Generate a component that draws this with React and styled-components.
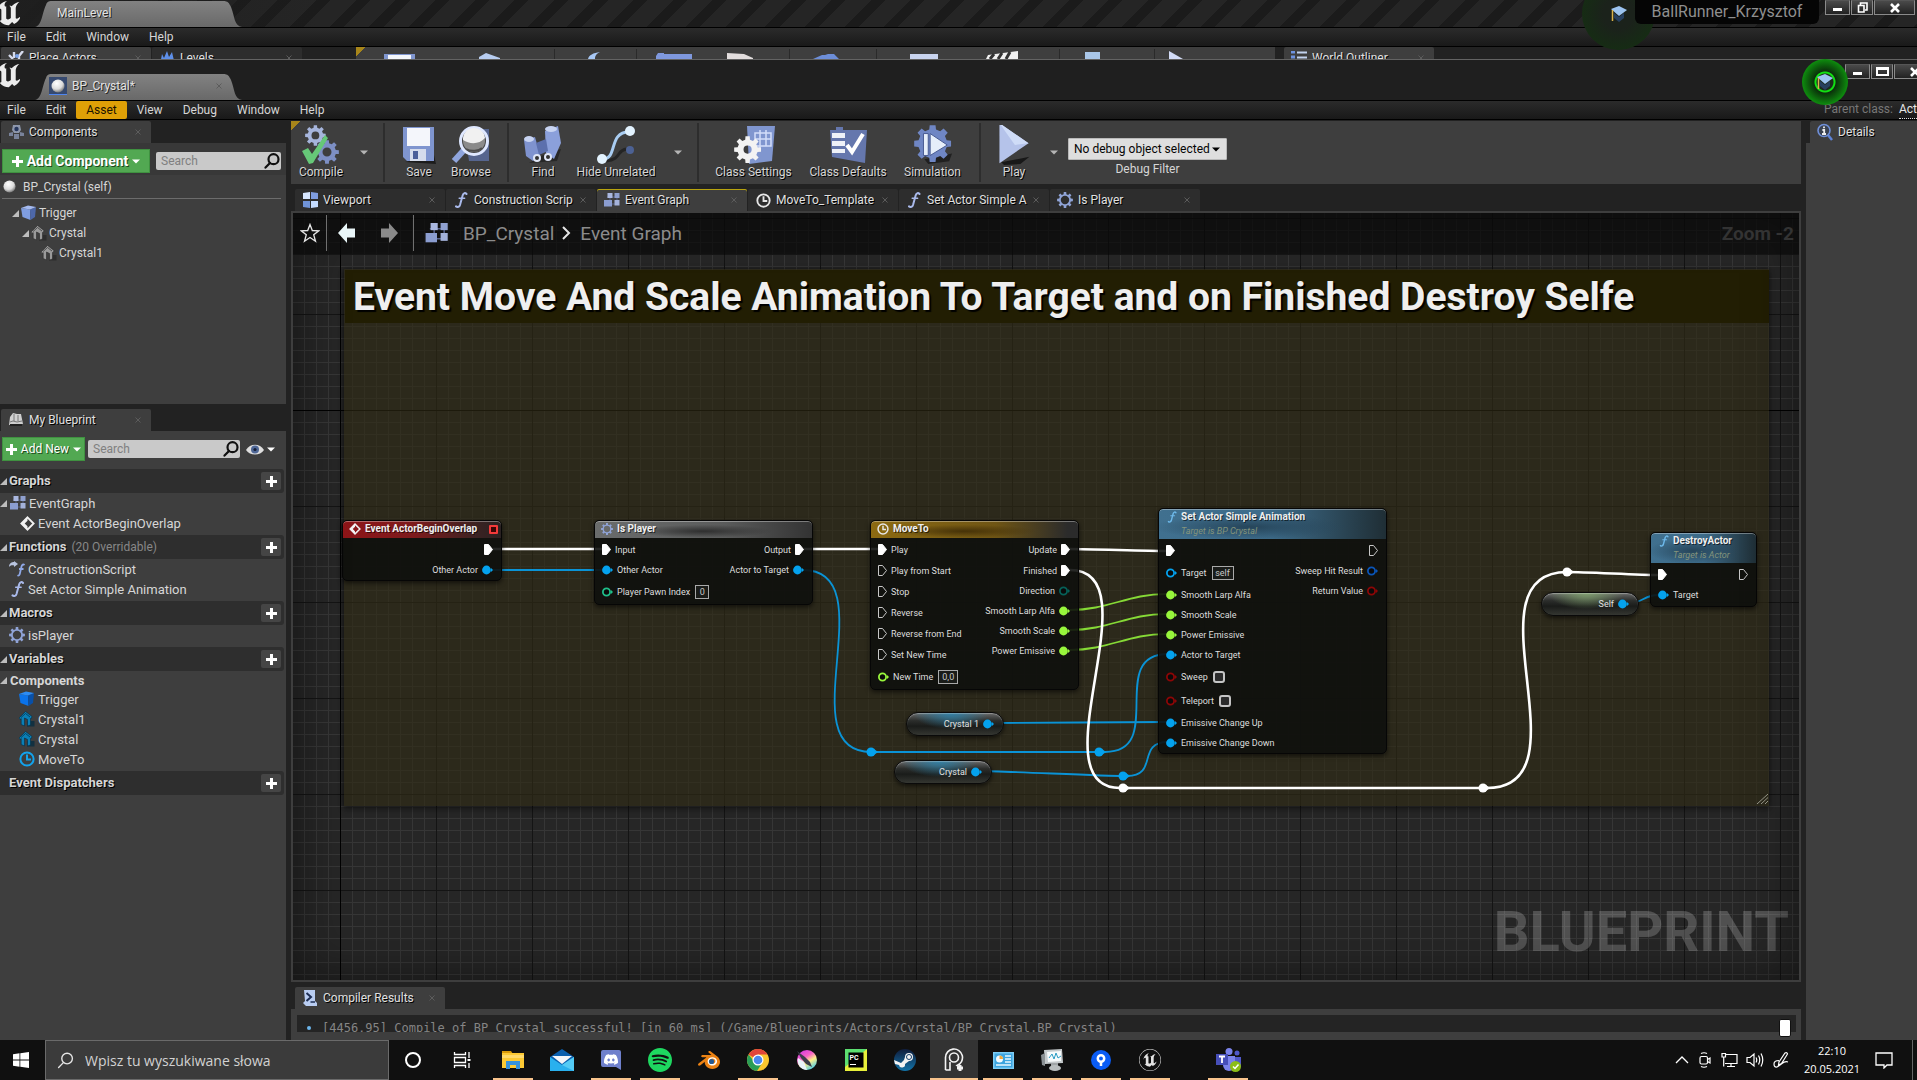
import React from "react";
import styled, { createGlobalStyle, css } from "styled-components";
import { SiUnrealengine, SiSpotify, SiBlender, SiSteam, SiDiscord } from "react-icons/si";

const GlobalStyle = createGlobalStyle`
  * { box-sizing: border-box; }
  body { margin: 0; background: #222; overflow: hidden; }
  body, button, input, select {
    font-family: Roboto, "Liberation Sans", sans-serif;
    font-size: 12px;
    color: #d6d6d6;
  }
  button { border: 0; padding: 0; background: none; cursor: default; }
  input:focus, select:focus { outline: none; }
  svg { display: block; flex: none; }
`;

/* ---------- icons ---------- */

const gearPath = (c, outer, inner, hole, teeth) => {
  const pts = [];
  const step = (Math.PI * 2) / teeth;
  for (let i = 0; i < teeth; i += 1) {
    const a = i * step - Math.PI / 2;
    [[-0.3, inner], [-0.2, outer], [0.2, outer], [0.3, inner]].forEach(([o, r]) => {
      pts.push(`${(c + Math.cos(a + o * step) * r).toFixed(2)} ${(c + Math.sin(a + o * step) * r).toFixed(2)}`);
    });
  }
  return `M${pts.join("L")}ZM${c + hole} ${c}A${hole} ${hole} 0 1 0 ${c - hole} ${c}A${hole} ${hole} 0 1 0 ${c + hole} ${c}Z`;
};

const Gear = ({ size = 16, color = "#8fa3d6", teeth = 8, hole = 4.2 }) => (
  <svg width={size} height={size} viewBox="0 0 16 16">
    <path d={gearPath(8, 8, 6, hole, teeth)} fill={color} fillRule="evenodd" />
  </svg>
);

const Clock = ({ size = 16, color = "#e6e6e6" }) => (
  <svg width={size} height={size} viewBox="0 0 16 16" fill="none" stroke={color} strokeWidth="2">
    <circle cx="8" cy="8" r="6.6" />
    <path d="M8 3.5V8.5H12" />
  </svg>
);

const Fn = ({ width = 14, height = 16, color = "#a9b9ea" }) => (
  <svg width={width} height={height} viewBox="0 0 14 16" fill="none" stroke={color} strokeLinecap="round">
    <path d="M12.5 2C11.3 .6 9.4 .8 8.7 3.2L6 13C5.4 15 3.6 15.6 2 14.4" strokeWidth="2" />
    <path d="M5.2 6.2H10.6" strokeWidth="1.5" />
  </svg>
);

const GraphIcon = ({ width = 16, height = 14 }) => (
  <svg width={width} height={height} viewBox="0 0 16 14">
    <path d="M3 4H14M3 11H14M6 3V11M13 3V11" stroke="#56628c" />
    <rect x="3.5" y="0" width="5" height="5" fill="#aab8e0" />
    <rect x="10.5" y="0" width="5" height="5" fill="#8fa0cf" />
    <rect x="0" y="7" width="8" height="6.5" fill="#8b9dd0" />
    <rect x="10.5" y="7" width="5" height="5.5" fill="#a4b2da" />
  </svg>
);

const Panes = () => (
  <svg width="15" height="16" viewBox="0 0 15 16">
    <path d="M0 1L7 0V7H0Z" fill="#d7e6ff" />
    <path d="M8 0L15 1V7H8Z" fill="#7f9de0" />
    <path d="M0 9H7V16L0 15Z" fill="#6f93d8" />
    <path d="M8 9H15V15L8 16Z" fill="#c5dcff" />
  </svg>
);

const Cube = ({ front = "#7f9de0", side = "#4d67a8", top = "#a5bbf0" }) => (
  <svg width="16" height="16" viewBox="0 0 16 16">
    <path d="M0 3L9 4.5L9.5 15L1.5 12Z" fill={front} />
    <path d="M9 4.5L15 2L14 12L9.5 15Z" fill={side} />
    <path d="M0 3L7 .5L15 2L9 4.5Z" fill={top} />
  </svg>
);

const House = ({ color = "#9a9a9a", dark = "#2a2a2a" }) => (
  <svg width="16" height="16" viewBox="0 0 16 16">
    <path d="M8 10H15.5V15.5H8Z" fill={dark} opacity=".75" />
    <path d="M0 7L6.5 .5L13 5.5L12 8L11.5 7.5V14L8.5 15V8.5L5.5 7V15L2.2 13.5V7.6L1 8.4Z" fill={color} stroke={dark} strokeWidth=".6" />
    <path d="M2 6.5L6.5 2.5L11 6" fill="none" stroke={dark} strokeWidth=".7" />
  </svg>
);

const Sphere = ({ size = 13 }) => (
  <svg width={size} height={size} viewBox="0 0 14 14">
    <defs>
      <radialGradient id="ball" cx=".4" cy=".3" r=".8">
        <stop offset="0" stopColor="#fff" />
        <stop offset=".55" stopColor="#dcdcdc" />
        <stop offset="1" stopColor="#555" />
      </radialGradient>
    </defs>
    <circle cx="7" cy="7" r="6.5" fill="url(#ball)" />
  </svg>
);

const Diamond = ({ size = 15 }) => (
  <svg width={size} height={size} viewBox="0 0 16 16">
    <path d="M8 1.5L14.5 8L8 14.5L1.5 8Z" fill="none" stroke="#f2f2f2" strokeWidth="2" />
    <path d="M8 1V5L5 8L8 11V15L1 8Z" fill="#f2f2f2" />
  </svg>
);

const Magnifier = ({ size = 16, color = "#111", weight = 2.2 }) => (
  <svg width={size} height={size} viewBox="0 0 16 16" fill="none" stroke={color} strokeWidth={weight}>
    <circle cx="9.5" cy="6.2" r="5" />
    <path d="M6 10L1.5 14.6" strokeLinecap="round" />
  </svg>
);

const Down = ({ width = 8, color = "#fff" }) => (
  <svg width={width} height="5" viewBox="0 0 8 5">
    <path d="M0 .5H8L4 4.5Z" fill={color} />
  </svg>
);

const Plus = ({ size = 11 }) => (
  <svg width={size} height={size} viewBox="0 0 11 11">
    <path d="M4 0H7V4H11V7H7V11H4V7H0V4H4Z" fill="#fff" />
  </svg>
);

const CloseX = () => (
  <svg width="6" height="6" viewBox="0 0 6 6" stroke="#5c5c5c">
    <path d="M.5 .5L5.5 5.5M5.5 .5L.5 5.5" />
  </svg>
);

const Cap = () => (
  <svg width="16" height="18" viewBox="0 0 16 18">
    <path d="M3 8L8 12L13 8V13L8 17L3 13Z" fill="#27405f" />
    <path d="M0 4L8 1L16 5L8 11Z" fill="#9cc4f0" />
    <path d="M1.5 5V16" stroke="#d9b24a" strokeWidth="1.5" />
  </svg>
);

const RobotIcon = () => (
  <svg width="15" height="16" viewBox="0 0 15 16">
    <path d="M4 1L11 1L12 6L10 9H5L3 6Z" fill="#8d97ab" />
    <circle cx="7.5" cy="5" r="2.2" fill="#26365c" />
    <path d="M0 9L4 8V12L0 12ZM11 8L15 9V12H11ZM5 10H10V15H5Z" fill="#79839a" />
  </svg>
);

const BlueprintHat = () => (
  <svg width="14" height="14" viewBox="0 0 14 14">
    <path d="M0 12L1 4L4 0L8 1L12 1L14 11Z" fill="#cfcfcf" />
    <path d="M1 9L4 8L8 9L13 8M5 1V8M9 2V8" stroke="#777" fill="none" />
    <path d="M1 12H13" stroke="#222" strokeWidth="2" />
  </svg>
);

const InfoIcon = () => (
  <svg width="16" height="18" viewBox="0 0 16 18">
    <path d="M11 12L15 17" stroke="#5d83d8" strokeWidth="2.5" />
    <circle cx="7" cy="7.5" r="6" fill="#3a4250" stroke="#6f8fd8" strokeWidth="1.6" />
    <path d="M7 3.5V5.2M5.4 7H7.2V11M5 11H9" stroke="#eee" strokeWidth="1.8" fill="none" />
  </svg>
);

const ShellIcon = () => (
  <svg width="14" height="16" viewBox="0 0 14 16">
    <path d="M1 0H12V11L14 13V16H3L0 13L2 11Z" fill="#b9cdf2" />
    <path d="M3.5 3L8 7L3.5 11" fill="none" stroke="#1d2e55" strokeWidth="2" />
    <path d="M7.5 12H12" stroke="#1d2e55" strokeWidth="1.6" />
  </svg>
);

const EyeIcon = () => (
  <svg width="18" height="11" viewBox="0 0 18 11">
    <path d="M0 6C4-1 14-1 18 6C14 12 4 12 0 6Z" fill="#dedede" />
    <circle cx="9" cy="5.5" r="4" fill="#4f6796" />
    <circle cx="9" cy="5.5" r="1.6" fill="#16203a" />
  </svg>
);

const ToolIcons = {
  compile: (
    <svg width="40" height="40" viewBox="0 0 40 40">
      <g transform="translate(4 0) scale(1.3)"><path d={gearPath(8, 8, 6, 3, 8)} fill="#a6b5dc" fillRule="evenodd" /></g>
      <g transform="translate(14 15) scale(1.5)"><path d={gearPath(8, 8, 6, 3, 8)} fill="#7d8fc4" fillRule="evenodd" /></g>
      <path d="M1 26L7 23L11 29L24 10L27 13L12 38L8 39Z" fill="#66c878" />
    </svg>
  ),
  save: (
    <svg width="36" height="40" viewBox="0 0 36 40">
      <path d="M4 37L35 39L33 30Z" fill="#1c1c1c" />
      <path d="M2 2H33V36H6L2 32Z" fill="#7f95cf" />
      <path d="M6 3H29V21H6Z" fill="#f4f6fb" />
      <path d="M9 24H25V36H9Z" fill="#d5dcec" />
      <path d="M12 26H17V34H12Z" fill="#4b5f99" />
    </svg>
  ),
  browse: (
    <svg width="40" height="40" viewBox="0 0 40 40">
      <path d="M13 4H38V36H18Z" fill="#56658e" />
      <path d="M13 25L3 36" stroke="#8fa5dd" strokeWidth="6" />
      <circle cx="23" cy="16" r="13.5" fill="#474747" stroke="#dfe8ff" strokeWidth="3" />
      <circle cx="23" cy="16" r="11" fill="#8b8b8b" />
      <path d="M12 15A11 11 0 0 1 34 13C28 20 18 19 12 15Z" fill="#f1f1f1" />
      <path d="M15 24C20 27 28 26 31 23" stroke="#4d4d4d" strokeWidth="2" fill="none" />
    </svg>
  ),
  find: (
    <svg width="40" height="40" viewBox="0 0 40 40">
      <path d="M6 38L34 36L38 24L20 30Z" fill="#1e1e1e" opacity=".7" />
      <path d="M1 15L12 12L17 30L10 36L3 31Z" fill="#7f93cf" />
      <path d="M22 6L35 1L38 18L31 34L23 28Z" fill="#8ba0db" />
      <path d="M13 18L23 14L25 26L16 30Z" fill="#5c70ad" />
      <ellipse cx="6" cy="14" rx="5" ry="3" fill="#c8d4f2" />
      <ellipse cx="28" cy="4" rx="6" ry="3" fill="#c8d4f2" />
      <circle cx="14" cy="33" r="4" fill="#dfe6f6" />
      <circle cx="25" cy="32" r="4" fill="#dfe6f6" />
      <circle cx="14" cy="33" r="2" fill="#333" />
      <circle cx="25" cy="32" r="2" fill="#333" />
    </svg>
  ),
  hide: (
    <svg width="40" height="40" viewBox="0 0 40 40">
      <path d="M30 24C20 26 26 34 10 36" stroke="#242424" strokeWidth="3" fill="none" />
      <path d="M7 34C22 34 12 7 33 7" stroke="#a9cdf2" strokeWidth="3" fill="none" />
      <circle cx="34" cy="6" r="5" fill="#e3f3ff" />
      <circle cx="6" cy="34" r="5" fill="#e3f3ff" />
      <circle cx="34" cy="25" r="4" fill="#4c6193" />
    </svg>
  ),
  settings: (
    <svg width="42" height="40" viewBox="0 0 42 40">
      <path d="M14 1H42L39 36L16 39Z" fill="#8096cf" />
      <path d="M22 8H38V21H22ZM27 5V23M33 5V21M22 14H38" fill="none" stroke="#d3defa" strokeWidth="1.5" />
      <g transform="translate(1 11) scale(1.7)"><path d={gearPath(8, 8, 6, 2.4, 8)} fill="#f3f3f3" fillRule="evenodd" /></g>
    </svg>
  ),
  defaults: (
    <svg width="40" height="40" viewBox="0 0 40 40">
      <path d="M2 5H8V2H15V5H39L37 38L4 32Z" fill="#6577ad" />
      <path d="M4 8H17V13H4ZM4 16H17V21H4ZM4 24H17V28H4Z" fill="#eef1f8" />
      <path d="M19 20L24 27L35 9" fill="none" stroke="#fff" strokeWidth="4" />
    </svg>
  ),
  simulation: (
    <svg width="40" height="40" viewBox="0 0 42 42">
      <path d="M12 36L41 30L38 38L16 41Z" fill="#202020" />
      <g transform="translate(1 0) scale(2.45)"><path d={gearPath(8, 8, 6.2, 0.1, 8)} fill="#6f86c4" /></g>
      <path d="M11 9H16V32H11Z" fill="#e6eefa" stroke="#44578f" />
      <path d="M18 9L36 21L18 32Z" fill="#e6eefa" stroke="#44578f" />
    </svg>
  ),
  play: (
    <svg width="34" height="40" viewBox="0 0 34 44">
      <path d="M3 41L34 35L24 43L6 44Z" fill="#181818" />
      <path d="M1 -2L33 20L1 42Z" fill="#b5c3ea" />
      <path d="M1 -2L33 20L18 22Z" fill="#cfdcf7" />
    </svg>
  ),
};

/* ---------- shared pieces ---------- */

const Screen = styled.div`
  height: 100vh;
  display: flex;
  flex-direction: column;
  overflow: hidden;
  background: #222;
`;

const TitleBar = styled.header`
  position: relative;
  display: flex;
  align-items: flex-end;
  flex: none;
  height: ${(p) => p.$height}px;
  border-bottom: 1px solid #000;
  background: #1f1f1f;
  ${(p) => p.$striped && css`
    background: linear-gradient(90deg, #1e1e1e, transparent 320px),
      repeating-linear-gradient(135deg, #1b1b1b 0 10px, #252525 10px 28px);
  `}
  ${(p) => p.$edge && css`border-top: 1px solid #636363;`}
`;

const Logo = styled.div`
  width: 20px;
  height: ${(p) => p.$height}px;
  margin-right: 15px;
  overflow: hidden;
  color: #ececec;
`;

const LogoMark = styled(SiUnrealengine)`
  width: 40px;
  height: 40px;
  margin: -8px 0 0 -11px;
  clip-path: circle(16px at 20px 20px);
`;

const WindowTab = styled.div`
  display: flex;
  align-items: center;
  width: 207px;
  height: 26px;
  padding: 0 20px 2px ${(p) => (p.$icon ? 14 : 22)}px;
  gap: 5px;
  background: linear-gradient(#828282, #696969);
  clip-path: path("M0 26C7 25 7 12 11 4C12 1 13 0 17 0H188C193 0 194 2 196 6C200 16 199 25 207 26Z");
  color: #e2e2e2;
  text-shadow: 1px 1px 0 #222;
`;

const Grow = styled.span`
  flex: 1;
`;

const IconTile = styled.span`
  display: grid;
  place-items: center;
  width: 18px;
  height: 18px;
  background: #36496f;
  border-bottom: 1px solid #4f86f0;
`;

const WinButtons = styled.div`
  display: flex;
  align-self: flex-start;
  gap: 1px;
  width: ${(p) => p.$width}px;
  margin-top: ${(p) => p.$top}px;
  margin-right: ${(p) => p.$right}px;
  overflow: hidden;
`;

const WinButton = styled.button`
  display: grid;
  place-items: center;
  flex: none;
  width: ${(p) => p.$width}px;
  height: 15px;
  border: 1px solid #8a8a8a;
  border-top-color: #555;
  background: linear-gradient(#4a4a4a, #222);
`;

const ProjectName = styled.div`
  position: relative;
  z-index: 4;
  align-self: flex-start;
  width: 184px;
  height: 24px;
  margin-right: 6px;
  line-height: 24px;
  border-radius: 0 0 6px 6px;
  background: #050505;
  color: #8f8f8f;
  font-size: 16px;
  text-align: center;
`;

const Glow = styled.button`
  position: absolute;
  z-index: 3;
  right: ${(p) => p.$right}px;
  top: ${(p) => p.$top}px;
  width: ${(p) => p.$size}px;
  height: ${(p) => p.$size}px;
  display: grid;
  place-items: center;
  border-radius: 50%;
  ${(p) => (p.$strong
    ? css`background: radial-gradient(circle, #1c2a1c 0 8px, #12e012 9px 10px, #0b300b 11px, #0c5f0c 17px, #0e8e0e 23px);`
    : css`background: radial-gradient(circle, #1b221b 30%, #12330f 100%);`)}
`;

const MenuBar = styled.nav`
  display: flex;
  align-items: stretch;
  flex: none;
  height: 19px;
  border-bottom: 1px solid #000;
  background: linear-gradient(#2b2b2b, #191919);
`;

const MenuItem = styled.button`
  padding: 0 10px;
  &:first-child { padding-left: 7px; }
  ${(p) => p.$active && css`
    border-radius: 2px;
    background: #dfa007;
    color: #1b1300;
  `}
`;

const ParentClass = styled.p`
  display: flex;
  gap: 6px;
  margin: 0 0 0 auto;
  line-height: 16px;
  color: #777;
  white-space: nowrap;
`;

const ClassLink = styled.a`
  color: #e6e6e6;
  text-decoration: none;
  border-bottom: 1px dotted #ddd;
`;

const TabBox = styled.div`
  display: flex;
  align-items: center;
  flex: none;
  width: ${(p) => p.$width || 150}px;
  height: 22px;
  padding: 0 10px 0 6px;
  gap: 4px;
  border-radius: 2px 2px 0 0;
  background: ${(p) => (p.$active ? "#3e3e3e" : "#2d2d2d")};
  ${(p) => p.$accent && css`box-shadow: inset 0 1px 0 #b8a30e;`}
  overflow: hidden;
`;

const TabIcon = styled.span`
  display: grid;
  place-items: center;
  width: 18px;
`;

const TabLabel = styled.button`
  flex: 1;
  overflow: hidden;
  white-space: nowrap;
  text-align: left;
  color: #e0e0e0;
  text-shadow: 1px 1px 0 #000;
`;

const Tab = ({ icon, label, width, active, accent }) => (
  <TabBox $width={width} $active={active} $accent={accent}>
    <TabIcon>{icon}</TabIcon>
    <TabLabel type="button">{label}</TabLabel>
    <button type="button" aria-label={`Close ${label}`}><CloseX /></button>
  </TabBox>
);

const TabStrip = styled.div`
  display: flex;
  gap: 1px;
  flex: none;
  padding-left: ${(p) => p.$indent || 0}px;
  margin-top: ${(p) => p.$top || 0}px;
`;

/* ---------- background window ---------- */

const BackDock = styled.div`
  display: flex;
  align-items: flex-start;
  flex: none;
  height: 12px;
  overflow: hidden;
  background: #222;
  padding-left: 1px;
`;

const BackToolbar = styled.div`
  display: flex;
  flex: none;
  width: 919px;
  height: 12px;
  margin: 0 9px 0 54px;
  background: linear-gradient(135deg, #a8861a 7px, #3e3e3e 7px);
`;

const BackSlivers = () => (
  <svg width="919" height="12" viewBox="356 47 919 12">
    <path d="M554.5 49V59M636.5 49V59M789.5 49V59M876.5 49V59M1059.5 49V59M1154.5 49V59" stroke="#2a2a2a" />
    <path d="M384 54H415V59H384Z" fill="#8096cf" />
    <path d="M388 55H411V59H388Z" fill="#f4f6fb" />
    <path d="M479 57L486 53L500 58V59H479Z" fill="#b8cdf0" />
    <path d="M588 59C589 55 593 53 600 52C596 54 595 56 595 59Z" fill="#a8c8f5" />
    <path d="M656 56L658 53H664V54H692V59H656Z" fill="#7f98dd" />
    <path d="M727 59V53L744 54L753 58V59Z" fill="#e3dede" />
    <path d="M813 59L822 55H825L828 54H834L839 59Z" fill="#6d8ed8" />
    <path d="M910 54H938V59H910Z" fill="#c9d4ef" />
    <path d="M986 59L988 55L1018 51V59Z" fill="#f1f1f1" />
    <path d="M994 54L990 59M1002 53L998 59M1010 52L1006 59" stroke="#333" strokeWidth="3" />
    <path d="M1085 52H1100V59H1085Z" fill="#a9c6e8" />
    <path d="M1169 51L1183 59H1169Z" fill="#d3dcf7" />
  </svg>
);

const LevelsIcon = () => (
  <svg width="15" height="14" viewBox="0 0 15 14"><path d="M0 14L2 3L4 7L7 0L9 6L12 1L15 14Z" fill="#5e8fe8" /></svg>
);
const PlaceIcon = () => (
  <svg width="16" height="14" viewBox="0 0 16 14">
    <path d="M1 4L5 8M6 1V7M15 0L11 5V11" stroke="#d7dced" strokeWidth="2.4" fill="none" />
    <circle cx="9" cy="5" r="2" fill="#7aa3ec" />
    <path d="M1 9L6 13" stroke="#7aa3ec" strokeWidth="3" />
  </svg>
);
const OutlinerIcon = () => (
  <svg width="16" height="14" viewBox="0 0 16 14"><path d="M0 1H4M0 6H4M0 11H4" stroke="#6f93e0" strokeWidth="3" /><path d="M6 1.5H16M6 6.5H16M6 11.5H16" stroke="#c2d2ee" strokeWidth="2" /></svg>
);

/* ---------- editor layout ---------- */

const Editor = styled.main`
  display: flex;
  flex: 1;
  gap: 5px;
  min-height: 0;
  padding-top: 1px;
`;

const Side = styled.aside`
  display: flex;
  flex-direction: column;
  flex: none;
  width: ${(p) => p.$width}px;
  overflow: hidden;
`;

const Panel = styled.section`
  flex: ${(p) => (p.$height ? "none" : 1)};
  height: ${(p) => (p.$height ? `${p.$height}px` : "auto")};
  background: #3e3e3e;
`;

const AddRow = styled.div`
  display: flex;
  align-items: center;
  gap: ${(p) => p.$gap}px;
  padding: 6px 5px 2px 2px;
  ${(p) => p.$shade && css`background: #383838;`}
`;

const AddButton = styled.button`
  display: flex;
  align-items: center;
  justify-content: center;
  gap: 4px;
  flex: none;
  width: ${(p) => p.$width}px;
  height: 24px;
  border: 1px solid #3f9140;
  background: #52a852;
  color: #fff;
  font-size: ${(p) => (p.$bold ? 14 : 12)}px;
  font-weight: ${(p) => (p.$bold ? 700 : 400)};
  white-space: nowrap;
  text-shadow: 1px 1px 0 #1d4a1d;
`;

const SearchBox = styled.label`
  display: flex;
  align-items: center;
  flex: 1;
  min-width: 0;
  height: 18px;
  padding: 0 1px 0 5px;
  border-radius: 2px;
  background: #c9c9c9;
`;

const SearchInput = styled.input`
  flex: 1;
  min-width: 0;
  padding: 0;
  border: 0;
  background: none;
  color: #222;
  &::placeholder { color: #808080; }
`;

const Search = () => (
  <SearchBox>
    <SearchInput type="text" placeholder="Search" aria-label="Search" />
    <Magnifier />
  </SearchBox>
);

const ViewButton = styled.button`
  display: flex;
  align-items: center;
  gap: 3px;
  margin: 0 6px 0 3px;
`;

const TreeRow = styled.div`
  display: flex;
  align-items: center;
  gap: 3px;
  height: ${(p) => p.$height || 20}px;
  padding-left: ${(p) => p.$indent}px;
  font-size: ${(p) => p.$font || 13}px;
  font-weight: ${(p) => (p.$bold ? 700 : 400)};
  white-space: nowrap;
`;

const SubRow = styled(TreeRow)`
  gap: 2px;
  font-size: 12px;
`;

const SelfRow = styled(TreeRow)`
  height: 24px;
  gap: 7px;
  margin: 0 5px 4px 2px;
  border-bottom: 1px solid #6c6c6c;
`;

const Expander = () => (
  <svg width="7" height="7" viewBox="0 0 7 7"><path d="M7 0V7H0Z" fill="#bdbdbd" /></svg>
);

const SectionBar = styled.div`
  display: flex;
  align-items: center;
  height: 24px;
  margin: ${(p) => (p.$first ? 6 : 2)}px 2px 0 0;
  padding: 0 3px 0 ${(p) => (p.$closed ? 9 : 0)}px;
  gap: 2px;
  border-radius: 0 3px 3px 0;
  background: #2e2e2e;
`;

const SectionTitle = styled.h2`
  margin: 0;
  font-size: 13px;
  line-height: 22px;
  font-weight: 700;
  text-shadow: 1px 1px 0 #000;
`;

const Hint = styled.span`
  flex: 1;
  padding-left: 3px;
  color: #888;
`;

const PlusButton = styled.button`
  display: grid;
  place-items: center;
  width: 20px;
  height: 18px;
  border-radius: 2px;
  background: #454545;
`;

const Section = ({ title, hint, first, closed }) => (
  <SectionBar $first={first} $closed={closed}>
    {!closed && <Expander />}
    <SectionTitle>{title}</SectionTitle>
    <Hint>{hint}</Hint>
    <PlusButton type="button" aria-label={`Add to ${title}`}><Plus /></PlusButton>
  </SectionBar>
);

const CtorIcon = () => (
  <svg width="16" height="16" viewBox="0 0 16 16">
    <path d="M0 6C0 2 3 1 5 1V0L9 3L5 6V4.5C3 4 1 4.5 0 6Z" fill="#b8c4e0" />
    <path d="M15.5 4C14.3 3 13 3.5 12.5 5.5L11 12C10.6 14.5 9.5 15 8.5 14.3M10 8H14.5" stroke="#8fa8e6" strokeWidth="1.8" fill="none" />
  </svg>
);

/* ---------- centre column ---------- */

const Center = styled.div`
  display: flex;
  flex-direction: column;
  flex: 1;
  min-width: 0;
`;

const Toolbar = styled.div`
  display: flex;
  align-items: stretch;
  flex: none;
  height: 63px;
  padding-left: 1px;
  background: linear-gradient(135deg, #a8861a 7px, #3e3e3e 7px);
`;

const ToolButton = styled.button`
  display: flex;
  flex-direction: column;
  align-items: center;
  justify-content: space-between;
  flex: none;
  width: ${(p) => p.$width}px;
  padding: 4px 0 5px;
  white-space: nowrap;
  text-shadow: 1px 1px 0 #000;
`;

const ToolMenu = styled.button`
  display: grid;
  place-items: center;
  flex: none;
  width: 28px;
`;

const Divider = styled.span`
  flex: none;
  width: 2px;
  margin: 2px ${(p) => p.$after}px 2px ${(p) => p.$before}px;
  background: #2d2d2d;
`;

const DebugGroup = styled.div`
  display: flex;
  flex-direction: column;
  align-items: center;
  gap: 2px;
  width: 159px;
  padding-top: 17px;
`;

const SelectWrap = styled.div`
  position: relative;
  width: 100%;
`;

const DebugSelect = styled.select`
  display: block;
  appearance: none;
  width: 100%;
  height: 22px;
  padding: 0 0 0 5px;
  border: 1px solid #b9b9b9;
  border-radius: 1px;
  background: #dedede;
  color: #050505;
`;

const SelectArrow = styled.span`
  position: absolute;
  right: 7px;
  top: 9px;
  pointer-events: none;
`;

const GraphFrame = styled.section`
  position: relative;
  flex: 1;
  min-height: 0;
  border: 2px solid #3e3e3e;
  overflow: hidden;
  background-color: #262626;
  background-image:
    linear-gradient(90deg, #000 1px, transparent 1px),
    linear-gradient(#000 1px, transparent 1px),
    linear-gradient(90deg, #141414 1px, transparent 1px),
    linear-gradient(#141414 1px, transparent 1px),
    linear-gradient(90deg, #363636 1px, transparent 1px),
    linear-gradient(#363636 1px, transparent 1px);
  background-size: 2000px 100%, 100% 2000px, 96px 100%, 100% 96px, 12px 100%, 100% 12px;
  background-position: 47px 0, 0 197px, 47px 0, 0 5px, 11px 0, 0 5px;
`;

const Vignette = styled.div`
  position: absolute;
  inset: 0;
  box-shadow: inset 0 0 50px rgba(0, 0, 0, 0.5);
  pointer-events: none;
`;

const GraphHeader = styled.div`
  position: absolute;
  inset: 0 0 auto 0;
  z-index: 4;
  display: flex;
  align-items: center;
  height: 42px;
  padding: 0 5px 2px 7px;
  background: rgba(8, 8, 8, 0.7);
  color: #8b8b8b;
`;

const HeaderRule = styled.span`
  width: 1px;
  height: 36px;
  margin: 0 ${(p) => p.$after}px 0 ${(p) => p.$before}px;
  background: #707070;
`;

const NavButton = styled.button`
  margin-right: ${(p) => p.$after || 0}px;
`;

const Crumb = styled.button`
  margin: 0 8px 0 14px;
  color: #8b8b8b;
  font-size: 19px;
`;

const CrumbEnd = styled(Crumb)`
  margin: 0 auto 0 9px;
`;

const ZoomLabel = styled.span`
  font-size: 19px;
  font-weight: 700;
  color: #333;
`;

const Watermark = styled.div`
  position: absolute;
  right: 10px;
  bottom: 12px;
  font-size: 56px;
  font-weight: 700;
  line-height: 72px;
  color: rgba(255, 255, 255, 0.2);
`;

/* Graph space: nodes and wires use screen-anchored units, the frame starts at ORIGIN. */
const ORIGIN = { x: 293, y: 213 };

const place = css`
  position: absolute;
  left: ${(p) => p.$x - ORIGIN.x}px;
  top: ${(p) => p.$y - ORIGIN.y}px;
  width: ${(p) => p.$w}px;
`;

const CommentBox = styled.div`
  ${place}
  height: ${(p) => p.$h}px;
  padding: 1px 0 0 1px;
  background: rgba(48, 44, 20, 0.6);
  box-shadow: 0 0 4px rgba(0, 0, 0, 0.5), 0 4px 6px rgba(0, 0, 0, 0.3);
`;

const CommentTitle = styled.h1`
  height: 53px;
  margin: 0;
  padding-left: 8px;
  line-height: 54px;
  background: #221e03;
  color: #efefef;
  font-size: 39px;
  font-weight: 700;
  white-space: nowrap;
  text-shadow: 2px 2px 1px #000;
`;

const Grip = styled.svg`
  position: absolute;
  right: 1px;
  bottom: 2px;
`;

const WireLayer = styled.svg`
  position: absolute;
  left: 0;
  top: 0;
`;

const NodeBox = styled.article`
  ${place}
  border: 1px solid #060606;
  border-radius: 5px;
  background: rgba(14, 16, 13, 0.9);
  box-shadow: 0 2px 5px rgba(0, 0, 0, 0.6);
  overflow: hidden;
  font-size: 9px;
  height: ${(p) => p.$h}px;
`;

const HEADS = {
  event: "linear-gradient(90deg, #8e1518, #7d1a1c 45%, #3a2222 85%, #2a2222)",
  macro: "radial-gradient(ellipse at 50% 60%, #2f2f2f, transparent 45%), linear-gradient(90deg, #6a6c6c, #5a5b5b 60%, #333)",
  timeline: "radial-gradient(ellipse at 45% 60%, #463208, transparent 45%), linear-gradient(90deg, #8c6a12, #6f5514 60%, #2b2b2b 95%)",
  func: "radial-gradient(ellipse at 40% 60%, #26455a, transparent 50%), linear-gradient(90deg, #40708f, #3d6b89 50%, #1f2e35)",
};

const NodeHead = styled.header`
  display: flex;
  align-items: flex-start;
  gap: 4px;
  height: ${(p) => (p.$kind === "func" ? 30 : 17)}px;
  padding: 0 3px 0 ${(p) => (p.$kind === "func" ? 8 : 6)}px;
  border-radius: 4px 4px 0 0;
  background: ${(p) => HEADS[p.$kind]};
  box-shadow: inset 0 1px 0 rgba(255, 255, 255, 0.35);
`;

const HeadIcon = styled.span`
  display: grid;
  align-items: center;
  height: 16px;
`;

const NodeTitles = styled.div`
  flex: 1;
  white-space: nowrap;
`;

const NodeTitle = styled.h3`
  margin: 0;
  font-size: 10px;
  line-height: 15px;
  font-weight: 700;
  color: #efefef;
  text-shadow: 1px 1px 0 rgba(0, 0, 0, 0.6);
`;

const NodeSub = styled.p`
  margin: 0;
  font-size: 9px;
  line-height: 14px;
  font-style: italic;
  color: #84957c;
`;

const RedFlag = styled.span`
  display: block;
  width: 9px;
  height: 9px;
  border: 2px solid #f23a3a;
  border-radius: 1px;
  background: #3a0505;
`;

const NodeBody = styled.div`
  display: flex;
  justify-content: space-between;
  padding: 1px 8px 0 7px;
`;

const PinColumn = styled.div`
  display: flex;
  flex-direction: column;
  align-items: ${(p) => (p.$end ? "flex-end" : "flex-start")};
`;

const PinRow = styled.div`
  display: flex;
  align-items: center;
  gap: 4px;
  height: ${(p) => p.$h}px;
  color: #dedede;
  white-space: nowrap;
  flex-direction: ${(p) => (p.$end ? "row-reverse" : "row")};
`;

const PinInput = styled.input`
  width: ${(p) => p.$w}px;
  height: 14px;
  padding: 0;
  margin-left: 1px;
  border: 1px solid #a9a9a9;
  background: #1a1c19;
  color: #c8c8c8;
  font-size: 9px;
  text-align: center;
`;

const PinCheck = styled.input`
  appearance: none;
  width: 12px;
  height: 12px;
  margin: 0 0 0 1px;
  border: 2px solid #c4c4c4;
  border-radius: 3px;
  background: #2b2b2b;
`;

const COLORS = {
  actor: "#04a2ee",
  float: "#98f63c",
  int: "#1fbf8a",
  bool: "#8c0606",
  struct: "#0a55b8",
  enum: "#066058",
};

const ExecPin = ({ linked }) => (
  <svg width="9" height="11" viewBox="0 0 9 11">
    <path d="M.5 .5H4.5L8.5 5.5L4.5 10.5H.5Z" fill={linked ? "#fff" : "none"} stroke={linked ? "#fff" : "#c8c8c8"} />
  </svg>
);

const DataPin = ({ color, linked }) => (
  <svg width="11" height="10" viewBox="0 0 11 10">
    <circle cx="4.5" cy="5" r={linked ? 4.4 : 3.6} fill={linked ? color : "#0a0a0a"} stroke={linked ? "none" : color} strokeWidth="1.8" />
    <path d="M9 3L11 5L9 7Z" fill={color} />
  </svg>
);

const Pin = ({ type = "exec", label, linked, end, value, width, check }) => {
  const h = type === "exec" ? 21 : check || value !== undefined ? 24 : 20;
  const id = `pin-${label || "exec"}`.replace(/ /g, "-").toLowerCase();
  const editable = value !== undefined || check;
  return (
    <PinRow $h={h} $end={end}>
      {type === "exec" ? <ExecPin linked={linked} /> : <DataPin color={COLORS[type]} linked={linked} />}
      {label && (editable ? <label htmlFor={id}>{label}</label> : <span>{label}</span>)}
      {value !== undefined && <PinInput id={id} type="text" defaultValue={value} $w={width} />}
      {check && <PinCheck id={id} type="checkbox" />}
    </PinRow>
  );
};

const GraphNode = ({ x, y, w, h, kind, icon, title, sub, flag, inputs, outputs }) => (
  <NodeBox $x={x} $y={y} $w={w} $h={h}>
    <NodeHead $kind={kind}>
      <HeadIcon>{icon}</HeadIcon>
      <NodeTitles>
        <NodeTitle>{title}</NodeTitle>
        {sub && <NodeSub>{sub}</NodeSub>}
      </NodeTitles>
      {flag && <HeadIcon><RedFlag /></HeadIcon>}
    </NodeHead>
    <NodeBody>
      <PinColumn>{inputs.map((p, i) => <Pin key={i} {...p} />)}</PinColumn>
      <PinColumn $end>{outputs.map((p, i) => <Pin key={i} end {...p} />)}</PinColumn>
    </NodeBody>
  </NodeBox>
);

const PillBox = styled.div`
  ${place}
  display: flex;
  align-items: center;
  justify-content: flex-end;
  gap: 4px;
  height: 24px;
  padding-right: 9px;
  border: 1px solid #0a0a0a;
  border-radius: 12px;
  background:
    radial-gradient(ellipse 38px 16px at 46% 0, ${(p) => p.$tint}, transparent),
    linear-gradient(#6a6a6a, #2b2d2b 35%, #1a1c1a 60%, #343631);
  box-shadow: 0 2px 4px rgba(0, 0, 0, 0.6), inset 0 1px 1px rgba(255, 255, 255, 0.3);
  color: #e2e2e2;
  font-size: 9px;
`;

const NODES = [
  {
    x: 342, y: 520, w: 160, h: 61, kind: "event", title: "Event ActorBeginOverlap", flag: true,
    icon: <Diamond size={12} />,
    inputs: [],
    outputs: [{ linked: true }, { type: "actor", label: "Other Actor", linked: true }],
  },
  {
    x: 594, y: 520, w: 219, h: 85, kind: "macro", title: "Is Player",
    icon: <Gear size={12} />,
    inputs: [
      { label: "Input", linked: true },
      { type: "actor", label: "Other Actor", linked: true },
      { type: "int", label: "Player Pawn Index", value: "0", width: 14 },
    ],
    outputs: [{ label: "Output", linked: true }, { type: "actor", label: "Actor to Target", linked: true }],
  },
  {
    x: 870, y: 520, w: 209, h: 170, kind: "timeline", title: "MoveTo",
    icon: <Clock size={12} />,
    inputs: [
      { label: "Play", linked: true },
      { label: "Play from Start" },
      { label: "Stop" },
      { label: "Reverse" },
      { label: "Reverse from End" },
      { label: "Set New Time" },
      { type: "float", label: "New Time", value: "0,0", width: 20 },
    ],
    outputs: [
      { label: "Update", linked: true },
      { label: "Finished", linked: true },
      { type: "enum", label: "Direction" },
      { type: "float", label: "Smooth Larp Alfa", linked: true },
      { type: "float", label: "Smooth Scale", linked: true },
      { type: "float", label: "Power Emissive", linked: true },
    ],
  },
  {
    x: 1158, y: 508, w: 229, h: 246, kind: "func", title: "Set Actor Simple Animation", sub: "Target is BP Crystal",
    icon: <Fn width={10} height={14} color="#6db8ea" />,
    inputs: [
      { linked: true },
      { type: "actor", label: "Target", value: "self", width: 22 },
      { type: "float", label: "Smooth Larp Alfa", linked: true },
      { type: "float", label: "Smooth Scale", linked: true },
      { type: "float", label: "Power Emissive", linked: true },
      { type: "actor", label: "Actor to Target", linked: true },
      { type: "bool", label: "Sweep", check: true },
      { type: "bool", label: "Teleport", check: true },
      { type: "actor", label: "Emissive Change Up", linked: true },
      { type: "actor", label: "Emissive Change Down", linked: true },
    ],
    outputs: [{}, { type: "struct", label: "Sweep Hit Result" }, { type: "bool", label: "Return Value" }],
  },
  {
    x: 1650, y: 532, w: 107, h: 75, kind: "func", title: "DestroyActor", sub: "Target is Actor",
    icon: <Fn width={10} height={14} color="#6db8ea" />,
    inputs: [{ linked: true }, { type: "actor", label: "Target", linked: true }],
    outputs: [{}],
  },
];

const PILLS = [
  { x: 906, y: 712, label: "Crystal 1", tint: "#2f7ea3" },
  { x: 894, y: 760, label: "Crystal", tint: "#2f7ea3" },
  { x: 1541, y: 592, label: "Self", tint: "#7d9c6c" },
];

/* [x1, y1, x2, y2, tangent, colour, thickness] */
const WIRES = [
  [493, 549, 602, 549, 20, "#fff", 2.6],
  [491, 570, 602, 570, 20, "#0a93d6", 1.8],
  [804, 549, 878, 549, 20, "#fff", 2.6],
  [803, 570, 871, 752, 84, "#0a93d6", 1.8],
  [871, 752, 1099, 752, 20, "#0a93d6", 1.8],
  [1105, 752, 1168, 654, 62, "#0a93d6", 1.8],
  [993, 723, 1166, 722, 20, "#0a93d6", 1.8],
  [981, 771, 1123, 776, 20, "#0a93d6", 1.8],
  [1127, 776, 1168, 742, 32, "#0a93d6", 1.8],
  [1070, 610, 1166, 594, 38, "#86da36", 1.8],
  [1070, 630, 1166, 614, 38, "#86da36", 1.8],
  [1070, 650, 1166, 634, 38, "#86da36", 1.8],
  [1070, 549, 1166, 551, 20, "#fff", 2.6],
  [1070, 570, 1120, 788, 86, "#fff", 2.6],
  [1123, 788, 1483, 788, 20, "#fff", 2.6],
  [1487, 788, 1567, 572, 104, "#fff", 2.6],
  [1567, 572, 1658, 575, 20, "#fff", 2.6],
  [1629, 603, 1658, 595, 14, "#0a93d6", 1.8],
];

const KNOTS = [
  [871, 752, COLORS.actor], [1099, 752, COLORS.actor], [1123, 776, COLORS.actor],
  [1123, 788, "#fff"], [1483, 788, "#fff"], [1567, 572, "#fff"],
];

const Wires = () => (
  <WireLayer width="1506" height="767" viewBox={`${ORIGIN.x} ${ORIGIN.y} 1506 767`} fill="none">
    {WIRES.map(([x1, y1, x2, y2, t, c, w], i) => (
      <path key={i} d={`M${x1} ${y1}C${x1 + t} ${y1} ${x2 - t} ${y2} ${x2} ${y2}`} stroke={c} strokeWidth={w} />
    ))}
    {KNOTS.map(([x, y, c]) => (
      <g key={`${x}-${y}`} fill={c}>
        <circle cx={x} cy={y} r="4.5" />
        <path d={`M${x + 3} ${y - 3}L${x + 7} ${y}L${x + 3} ${y + 3}Z`} />
      </g>
    ))}
  </WireLayer>
);

const Results = styled.section`
  position: relative;
  flex: none;
  height: 31px;
  padding: 6px 5px 8px 6px;
  background: #3e3e3e;
`;

const ResultList = styled.ul`
  height: 17px;
  margin: 0;
  padding: 4px 0 0 10px;
  overflow: hidden;
  list-style: none;
  background: #242424;
`;

const ResultItem = styled.li`
  display: flex;
  align-items: center;
  gap: 11px;
  height: 17px;
  font-family: "DejaVu Sans Mono", "Liberation Mono", monospace;
  color: #858585;
  &::before {
    content: "";
    width: 4px;
    height: 4px;
    border-radius: 50%;
    background: #6cb6ec;
  }
`;

const ScrollThumb = styled.span`
  position: absolute;
  right: 10px;
  top: 10px;
  width: 12px;
  height: 18px;
  border: 1px solid #111;
  border-radius: 2px;
  background: #fff;
`;

/* ---------- taskbar ---------- */

const Taskbar = styled.footer`
  display: flex;
  align-items: stretch;
  flex: none;
  height: 40px;
  background: #101010;
`;

const StartButton = styled.button`
  display: grid;
  place-items: center;
  width: 45px;
  padding-right: 3px;
`;

const TaskSearch = styled.label`
  display: flex;
  align-items: center;
  gap: 11px;
  width: 344px;
  padding-left: 11px;
  border: 1px solid #6a6a6a;
  background: #3b3b3b;
`;

const TaskSearchInput = styled.input`
  flex: 1;
  min-width: 0;
  padding: 0;
  border: 0;
  background: none;
  font-family: "Open Sans", "Noto Sans", sans-serif;
  font-size: 14px;
  &::placeholder { color: #d2d2d2; opacity: 1; }
`;

const Apps = styled.div`
  display: flex;
  gap: 1px;
`;

const AppButton = styled.button`
  display: grid;
  place-items: center;
  width: 48px;
  margin-right: ${(p) => p.$after || 0}px;
  background-color: ${(p) => (p.$active ? "#333" : "transparent")};
  background-repeat: no-repeat;
  background-position: center bottom;
  background-size: ${(p) => (p.$active ? "48px" : "40px")} 2px;
  ${(p) => p.$open && css`background-image: linear-gradient(#f9c48d, #f9c48d);`}
`;

const Tray = styled.div`
  display: flex;
  align-items: center;
  gap: 8px;
  margin-left: auto;
`;

const ClockText = styled.time`
  width: 60px;
  margin: 0 5px 0 4px;
  font-family: "Open Sans", "Noto Sans", sans-serif;
  font-size: 11px;
  line-height: 18px;
  text-align: center;
  color: #fff;
`;

const ShowDesktop = styled.button`
  align-self: stretch;
  width: 5px;
  margin-left: 11px;
  border-left: 1px solid #666;
`;

const APPS = [
  { name: "Cortana", icon: <svg width="18" height="18" viewBox="0 0 18 18"><circle cx="9" cy="9" r="7" fill="none" stroke="#fff" strokeWidth="2" /></svg> },
  { name: "Task view", after: 2, icon: <svg width="18" height="18" viewBox="0 0 18 18" fill="none" stroke="#fff"><path d="M1.5 1V3.5H12.5V1M1.5 17V14.5H12.5V17M1.5 6.5H12.5V11.5H1.5ZM16 1V7M16 12V17" strokeWidth="1.3" /><path d="M14.5 9H17.5" strokeWidth="2" /></svg> },
  { name: "File Explorer", open: true, icon: <svg width="22" height="20" viewBox="0 0 22 20"><path d="M0 1H9L11 4H0Z" fill="#d99a09" /><path d="M0 3H22V18H0Z" fill="#fcc934" /><path d="M0 5H22V8H0Z" fill="#ffda6b" /><path d="M4 19V11H18V19H14V15H8V19Z" fill="#3592dc" /></svg> },
  { name: "Mail", icon: <svg width="24" height="22" viewBox="0 0 24 22"><path d="M0 8L12 0L24 8V22H0Z" fill="#0a5fae" /><path d="M0 8L12 16L24 8V22H0Z" fill="#29b0ee" /><path d="M2 7H22L12 15Z" fill="#f3f6fa" /><path d="M12 16L24 8V22Z" fill="#54cbf5" /></svg> },
  { name: "Discord", open: true, icon: <svg width="20" height="20" viewBox="0 0 20 20"><path d="M2 0H18A2 2 0 0 1 20 2V20L15 17H2A2 2 0 0 1 0 15V2A2 2 0 0 1 2 0Z" fill="#6f80cc" /><g transform="translate(3 2.5)"><SiDiscord size={14} color="#fff" /></g></svg> },
  { name: "Spotify", open: true, icon: <SiSpotify size={24} color="#1ed760" /> },
  { name: "Blender", icon: <svg width="22" height="22" viewBox="0 0 22 22"><circle cx="13.500" cy="12.500" r="6" fill="#fff" /><SiBlender size={22} color="#ec8213" /><circle cx="13.500" cy="12.500" r="2.600" fill="#245a94" /></svg> },
  { name: "Chrome", open: true, icon: <svg width="22" height="22" viewBox="0 0 22 22"><circle cx="11" cy="11" r="11" fill="#fbc62e" /><path d="M11 11L1.5 5.5A11 11 0 0 1 20.5 5.5H11Z" fill="#e0453a" /><path d="M1.5 5.5L8 13.5L10 22A11 11 0 0 1 1.5 5.5Z" fill="#2a9d56" /><path d="M6 14L15.5 13.5L10 22Z" fill="#2a9d56" /><circle cx="11" cy="11" r="5.5" fill="#fff" /><circle cx="11" cy="11" r="4.3" fill="#4a87ee" /></svg> },
  { name: "Krita", icon: <svg width="20" height="20" viewBox="0 0 20 20"><defs><linearGradient id="kr" x1=".2" y1="0" x2=".8" y2="1"><stop offset="0" stopColor="#d33ce0" /><stop offset=".35" stopColor="#f760c8" /><stop offset=".6" stopColor="#fff08a" /><stop offset="1" stopColor="#35c8f5" /></linearGradient></defs><circle cx="10" cy="10" r="10" fill="url(#kr)" /><path d="M1 8A9.500 9.500 0 0 0 10 20L7 12Z" fill="#eaf3fa" /><path d="M0 1L8 7L13 12L15 17L9 14L4 8Z" fill="#3b3d4a" /></svg> },
  { name: "PyCharm", icon: <svg width="22" height="22" viewBox="0 0 22 22"><rect width="22" height="22" fill="#e8f03a" /><path d="M0 0H22L0 18Z" fill="#21d789" opacity=".7" /><rect x="3.5" y="3.5" width="15" height="15" fill="#000" /><text x="4.5" y="11" fontSize="7" fontWeight="700" fill="#fff" fontFamily="Roboto">PC</text><path d="M5 15.5H11" stroke="#fff" /></svg> },
  { name: "Steam", icon: <svg width="22" height="22" viewBox="0 0 22 22"><defs><linearGradient id="st" x1="0" y1="0" x2="0" y2="1"><stop offset="0" stopColor="#101d3c" /><stop offset="1" stopColor="#1273a8" /></linearGradient></defs><circle cx="11" cy="11" r="11" fill="url(#st)" /><path d="M0 11L7 14L10 11L11 8A4 4 0 1 1 15 12L11 15A3 3 0 1 1 5 16L1 15Z" fill="#f3f3f3" /><circle cx="15" cy="8" r="2.5" fill="#f3f3f3" stroke="#123e6b" /></svg> },
  { name: "PureRef", open: true, active: true, icon: <svg width="22" height="24" viewBox="0 0 22 24" fill="none" stroke="#f3f3f3" strokeWidth="1.6"><path d="M2.500 22V9.500A8.500 8.500 0 1 1 14 17.500L17 20M2.500 22H7V14" /><circle cx="11" cy="9.500" r="4.500" /><path d="M17 17V23M14 20H20" strokeWidth="3" /></svg> },
  { name: "Control Panel", open: true, icon: <svg width="21" height="17" viewBox="0 0 21 17"><rect width="21" height="17" fill="#7dcdf5" /><rect x="1.5" y="1.5" width="18" height="14" fill="#3ea5df" /><circle cx="6.5" cy="7" r="3.5" fill="#f4fbff" /><path d="M6.5 7V3.5A3.500 3.500 0 0 1 10 7Z" fill="#f2a93b" /><path d="M12 4H18M12 7H18M12 10H18M3 13H18" stroke="#e8f8ff" strokeWidth="1.5" /></svg> },
  { name: "Monitor", open: true, icon: <svg width="22" height="22" viewBox="0 0 22 22"><path d="M3 1L21 0L22 14L4 15Z" fill="#c5cacc" /><path d="M6 3L20 2V12L7 13Z" fill="#f7fbfc" /><path d="M8 9L11 5L13 10L15 4L17 9L20 7" stroke="#2b9cc4" fill="none" /><path d="M0 6L4 4V17L1 16Z" fill="#8b9194" /><path d="M10 14H17V18H10Z" fill="#a0a5a7" /><ellipse cx="14" cy="19" rx="6" ry="3" fill="#b9bebf" /></svg> },
  { name: "Sourcetree", open: true, icon: <svg width="20" height="20" viewBox="0 0 20 20"><circle cx="10" cy="10" r="10" fill="#0a5cf5" /><circle cx="10" cy="8.5" r="3.2" fill="none" stroke="#fff" strokeWidth="2.5" /><path d="M10 12V16" stroke="#fff" strokeWidth="2.5" /></svg> },
  { name: "Unreal Editor", open: true, after: 29, icon: <SiUnrealengine size={22} color="#e4e4e4" /> },
  { name: "Teams", open: true, icon: <svg width="25" height="24" viewBox="0 0 25 24"><circle cx="13" cy="3.5" r="3.5" fill="#7b83eb" /><circle cx="21" cy="5" r="2.5" fill="#5059c9" /><path d="M17 9H25V16A4 4 0 0 1 17 18Z" fill="#5059c9" /><path d="M7 8H19V17A6 6 0 0 1 7 17Z" fill="#7b83eb" /><rect y="6" width="12" height="11" fill="#464eb8" /><path d="M3 8.5H9M6 8.5V15" stroke="#fff" strokeWidth="1.8" /><circle cx="19.5" cy="18.5" r="5.5" fill="#8cbd18" /><path d="M17 18.5L19 20.5L22.5 16.5" stroke="#fff" strokeWidth="1.5" fill="none" /></svg> },
];

const MinGlyph = () => <svg width="11" height="9" viewBox="0 0 11 9"><path d="M1 5H10V8H1Z" fill="#fff" /></svg>;
const RestoreGlyph = () => <svg width="11" height="11" viewBox="0 0 11 11" fill="none" stroke="#fff" strokeWidth="1.6"><path d="M3.5 3V1H10V8H8" /><path d="M1.5 3.5H7V10H1.5Z" /></svg>;
const MaxGlyph = () => <svg width="13" height="9" viewBox="0 0 13 9" fill="none" stroke="#fff" strokeWidth="2"><path d="M1 1H12V8H1Z" /><path d="M1 2H12" /></svg>;
const CloseGlyph = () => <svg width="10" height="10" viewBox="0 0 10 10" stroke="#fff" strokeWidth="2.6"><path d="M1 1L9 9M9 1L1 9" /></svg>;

const Menu = ({ items, children }) => (
  <MenuBar>
    {items.map((m) => <MenuItem key={m} type="button" $active={m === "Asset"}>{m}</MenuItem>)}
    {children}
  </MenuBar>
);

export default function App() {
  return (
    <Screen>
      <GlobalStyle />

      <TitleBar $height={28} $striped>
        <Logo $height={26}><LogoMark /></Logo>
        <WindowTab>MainLevel</WindowTab>
        <Grow />
        <Glow type="button" aria-label="Tutorials" $right={262} $top={-23} $size={73}><Cap /></Glow>
        <ProjectName>BallRunner_Krzysztof</ProjectName>
        <WinButtons $width={90} $top={0} $right={2}>
          <WinButton type="button" aria-label="Minimize" $width={25}><MinGlyph /></WinButton>
          <WinButton type="button" aria-label="Restore" $width={22}><RestoreGlyph /></WinButton>
          <WinButton type="button" aria-label="Close" $width={41}><CloseGlyph /></WinButton>
        </WinButtons>
      </TitleBar>
      <Menu items={["File", "Edit", "Window", "Help"]} />
      <BackDock>
        <TabStrip>
          <Tab icon={<PlaceIcon />} label="Place Actors" active />
          <Tab icon={<LevelsIcon />} label="Levels" />
        </TabStrip>
        <BackToolbar><BackSlivers /></BackToolbar>
        <Tab icon={<OutlinerIcon />} label="World Outliner" active />
      </BackDock>

      <TitleBar $height={42} $edge>
        <Logo $height={37}><LogoMark /></Logo>
        <WindowTab $icon>
          <IconTile><Sphere size={14} /></IconTile>
          BP_Crystal*
          <Grow />
          <button type="button" aria-label="Close BP_Crystal"><CloseX /></button>
        </WindowTab>
        <Grow />
        <Glow type="button" aria-label="Tutorials" $right={69} $top={-1} $size={46} $strong><Cap /></Glow>
        <WinButtons $width={72} $top={4} $right={0}>
          <WinButton type="button" aria-label="Minimize" $width={25}><MinGlyph /></WinButton>
          <WinButton type="button" aria-label="Maximize" $width={22}><MaxGlyph /></WinButton>
          <WinButton type="button" aria-label="Close" $width={41}><CloseGlyph /></WinButton>
        </WinButtons>
      </TitleBar>
      <Menu items={["File", "Edit", "Asset", "View", "Debug", "Window", "Help"]}>
        <ParentClass>Parent class: <ClassLink href="#actor">Act</ClassLink></ParentClass>
      </Menu>

      <Editor>
        <Side $width={286}>
          <TabStrip $indent={1}><Tab icon={<RobotIcon />} label="Components" active /></TabStrip>
          <Panel $height={261}>
            <AddRow $gap={6} $shade>
              <AddButton type="button" $width={148} $bold><Plus /> Add Component <Down /></AddButton>
              <Search />
            </AddRow>
            <SelfRow $indent={1} $font={12}><Sphere /> BP_Crystal (self)</SelfRow>
            <SubRow $indent={12}><Expander /><Cube /> Trigger</SubRow>
            <SubRow $indent={22}><Expander /><House /> Crystal</SubRow>
            <SubRow $indent={41}><House /> Crystal1</SubRow>
          </Panel>
          <TabStrip $indent={1} $top={5}><Tab icon={<BlueprintHat />} label="My Blueprint" active /></TabStrip>
          <Panel>
            <AddRow $gap={3}>
              <AddButton type="button" $width={83}><Plus /> Add New <Down /></AddButton>
              <Search />
              <ViewButton type="button" aria-label="View options"><EyeIcon /><Down /></ViewButton>
            </AddRow>
            <Section title="Graphs" first />
            <TreeRow $indent={0}><Expander /><GraphIcon /> EventGraph</TreeRow>
            <TreeRow $indent={20}><Diamond /> Event ActorBeginOverlap</TreeRow>
            <Section title="Functions" hint="(20 Overridable)" />
            <TreeRow $indent={9}><CtorIcon /> ConstructionScript</TreeRow>
            <TreeRow $indent={10}><Fn width={15} /> Set Actor Simple Animation</TreeRow>
            <Section title="Macros" />
            <TreeRow $indent={9}><Gear /> isPlayer</TreeRow>
            <Section title="Variables" />
            <TreeRow $indent={0} $height={18} $bold><Expander /> Components</TreeRow>
            <TreeRow $indent={19}><Cube front="#0b73ea" side="#0850a8" top="#2b8cf5" /> Trigger</TreeRow>
            <TreeRow $indent={19}><House color="#0a7fb5" dark="#062c42" /> Crystal1</TreeRow>
            <TreeRow $indent={19}><House color="#0a7fb5" dark="#062c42" /> Crystal</TreeRow>
            <TreeRow $indent={19}><Clock color="#12a3ee" /> MoveTo</TreeRow>
            <Section title="Event Dispatchers" closed />
          </Panel>
        </Side>

        <Center>
          <Toolbar>
            <ToolButton type="button" $width={58}>{ToolIcons.compile}Compile</ToolButton>
            <ToolMenu type="button" aria-label="Compile options"><Down color="#b5b5b5" /></ToolMenu>
            <Divider $before={5} $after={9} />
            <ToolButton type="button" $width={50}>{ToolIcons.save}Save</ToolButton>
            <ToolButton type="button" $width={54}>{ToolIcons.browse}Browse</ToolButton>
            <Divider $before={9} $after={9} />
            <ToolButton type="button" $width={50}>{ToolIcons.find}Find</ToolButton>
            <ToolButton type="button" $width={96}>{ToolIcons.hide}Hide Unrelated</ToolButton>
            <ToolMenu type="button" aria-label="Hide options"><Down color="#b5b5b5" /></ToolMenu>
            <Divider $before={5} $after={7} />
            <ToolButton type="button" $width={95}>{ToolIcons.settings}Class Settings</ToolButton>
            <ToolButton type="button" $width={94}>{ToolIcons.defaults}Class Defaults</ToolButton>
            <ToolButton type="button" $width={75}>{ToolIcons.simulation}Simulation</ToolButton>
            <Divider $before={9} $after={7} />
            <ToolButton type="button" $width={52}>{ToolIcons.play}Play</ToolButton>
            <ToolMenu type="button" aria-label="Play options"><Down color="#b5b5b5" /></ToolMenu>
            <DebugGroup>
              <SelectWrap>
                <DebugSelect id="debug-filter"><option>No debug object selected</option></DebugSelect>
                <SelectArrow><Down color="#000" /></SelectArrow>
              </SelectWrap>
              <label htmlFor="debug-filter">Debug Filter</label>
            </DebugGroup>
          </Toolbar>

          <TabStrip $indent={4} $top={5}>
            <Tab icon={<Panes />} label="Viewport" />
            <Tab icon={<Fn />} label="Construction Scrip" />
            <Tab icon={<GraphIcon />} label="Event Graph" active accent />
            <Tab icon={<Clock size={15} />} label="MoveTo_Template" />
            <Tab icon={<Fn />} label="Set Actor Simple A" />
            <Tab icon={<Gear />} label="Is Player" />
          </TabStrip>

          <GraphFrame>
            <GraphHeader>
              <NavButton type="button" aria-label="Favorite">
                <svg width="20" height="20" viewBox="0 0 20 20" fill="none" stroke="#e6e6e6" strokeWidth="1.3"><path d="M10 1.5L12.3 7.5L18.8 7.8L13.7 11.8L15.5 18.2L10 14.5L4.5 18.2L6.3 11.8L1.2 7.8L7.7 7.5Z" /></svg>
              </NavButton>
              <HeaderRule $before={6} $after={11} />
              <NavButton type="button" aria-label="Back" $after={24}>
                <svg width="18" height="22" viewBox="0 0 18 22"><path d="M0 11L9 1V6.5H17V15.5H9V21Z" fill="#e9f6f8" /></svg>
              </NavButton>
              <NavButton type="button" aria-label="Forward">
                <svg width="18" height="22" viewBox="0 0 18 22"><path d="M18 11L9 1V6.5H1V15.5H9V21Z" fill="#8a8a8a" /></svg>
              </NavButton>
              <HeaderRule $before={15} $after={11} />
              <GraphIcon width={24} height={20} />
              <Crumb type="button">BP_Crystal</Crumb>
              <svg width="9" height="14" viewBox="0 0 9 14" fill="none" stroke="#e6e6e6" strokeWidth="2"><path d="M1 1L7 7L1 13" /></svg>
              <CrumbEnd type="button">Event Graph</CrumbEnd>
              <ZoomLabel>Zoom -2</ZoomLabel>
            </GraphHeader>
            <CommentBox $x={344} $y={269} $w={1425} $h={537}>
              <CommentTitle>Event Move And Scale Animation To Target and on Finished Destroy Selfe</CommentTitle>
              <Grip width="11" height="10" viewBox="0 0 11 10" stroke="#9a9a8c"><path d="M0 10L11 0M4 10L11 3.5M8 10L11 7" /></Grip>
            </CommentBox>
            <Wires />
            {NODES.map((n) => <GraphNode key={n.title} {...n} />)}
            {PILLS.map((p) => (
              <PillBox key={p.label} $x={p.x} $y={p.y} $w={98} $tint={p.tint}>
                {p.label}
                <DataPin color={COLORS.actor} linked />
              </PillBox>
            ))}
            <Watermark>BLUEPRINT</Watermark>
            <Vignette />
          </GraphFrame>

          <TabStrip $indent={4} $top={5}><Tab icon={<ShellIcon />} label="Compiler Results" active /></TabStrip>
          <Results>
            <ResultList>
              <ResultItem>[4456,95] Compile of BP_Crystal successful! [in 60 ms] (/Game/Blueprints/Actors/Cyrstal/BP_Crystal.BP_Crystal)</ResultItem>
            </ResultList>
            <ScrollThumb />
          </Results>
        </Center>

        <Side $width={111}>
          <TabStrip $indent={4}><Tab icon={<InfoIcon />} label="Details" active /></TabStrip>
          <Panel />
        </Side>
      </Editor>

      <Taskbar>
        <StartButton type="button" aria-label="Start">
          <svg width="16" height="16" viewBox="0 0 16 16"><path d="M0 2.3L6.5 1.3V7.6H0ZM7.3 1.2L16 0V7.6H7.3ZM0 8.4H6.5V14.7L0 13.7ZM7.3 8.4H16V16L7.3 14.8Z" fill="#fff" /></svg>
        </StartButton>
        <TaskSearch>
          <Magnifier size={17} color="#e6e6e6" weight={1.3} />
          <TaskSearchInput type="text" placeholder="Wpisz tu wyszukiwane słowa" aria-label="Wpisz tu wyszukiwane słowa" />
        </TaskSearch>
        <Apps>
          {APPS.map((a) => (
            <AppButton key={a.name} type="button" aria-label={a.name} $open={a.open} $active={a.active} $after={a.after}>{a.icon}</AppButton>
          ))}
        </Apps>
        <Tray>
          <svg width="14" height="8" viewBox="0 0 14 8" fill="none" stroke="#fff" strokeWidth="1.3"><path d="M1 7L7 1L13 7" /></svg>
          <svg width="16" height="16" viewBox="0 0 16 16" fill="none" stroke="#fff" strokeWidth="1.2"><rect x="3" y="4.5" width="7.5" height="7.5" rx="1.5" /><path d="M10.5 7.5L13 6V11L10.5 9.5M4 1.5Q7 0 10 1.5M4 14.5Q7 16 10 14.5" /></svg>
          <svg width="17" height="16" viewBox="0 0 17 16" fill="none" stroke="#fff" strokeWidth="1.2"><path d="M5 2.5H16V11.5H4M10 11.5V14.5M6 14.5H14M1 1.5H4.5V5H1ZM2.7 5V14.5" /></svg>
          <svg width="18" height="16" viewBox="0 0 18 16" fill="none" stroke="#fff" strokeWidth="1.2"><path d="M1 5.5H4L8 2V14L4 10.5H1ZM10 5.5Q11.5 8 10 10.5M12.5 3.5Q15 8 12.5 12.5M15 1.5Q18.5 8 15 14.5" /></svg>
          <svg width="18" height="18" viewBox="0 0 18 18" fill="none" stroke="#fff" strokeWidth="1.2"><path d="M7 11L13 2Q15 1 15.5 3L9.5 12.5L6.5 14ZM7 9.5Q2 9.5 2 13Q2 16.5 5 16Q7 15 10 12.5T16 11" /></svg>
          <ClockText>22:10<br />20.05.2021</ClockText>
          <svg width="18" height="17" viewBox="0 0 18 17" fill="none" stroke="#fff" strokeWidth="1.3"><path d="M1 1H17V13H12L9 16L9 13H1Z" /></svg>
          <ShowDesktop type="button" aria-label="Show desktop" />
        </Tray>
      </Taskbar>
    </Screen>
  );
}
